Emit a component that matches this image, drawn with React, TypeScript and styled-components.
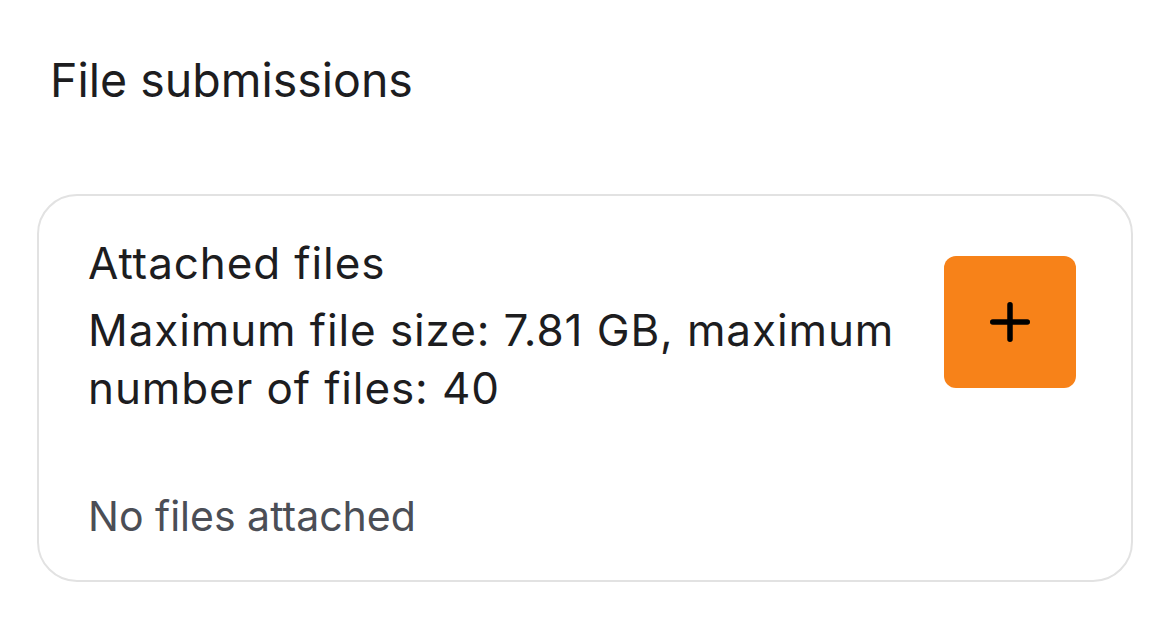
import React from "react";
import styled, { createGlobalStyle } from "styled-components";

const Global = createGlobalStyle`
  html, body { margin: 0; padding: 0; background: #ffffff; }
  body { font-family: Inter, Roboto, "Noto Sans", sans-serif; color: #1f1f1f; }
`;

const Page = styled.div`
  width: 1170px;
  height: 627px;
  box-sizing: border-box;
  padding: 50px 37px 0 37px;
  display: flex;
  flex-direction: column;
`;

const Title = styled.h1`
  margin: 0 0 0 13px;
  font-size: 46.5px;
  line-height: 60px;
  font-weight: 400;
  color: #1d1d1f;
`;

const Card = styled.section`
  margin-top: 84px;
  border: 2px solid #e2e2e2;
  border-radius: 40px;
  box-sizing: border-box;
  height: 388px;
  padding: 38px 55px 0 49px;
  display: flex;
  flex-direction: column;
`;

const Header = styled.div`
  display: flex;
  justify-content: space-between;
  align-items: flex-start;
`;

const Info = styled.div`
  display: flex;
  flex-direction: column;
`;

const Label = styled.div`
  font-size: 44px;
  line-height: 58px;
  letter-spacing: 0.9px;
  color: #1d1d1f;
  margin-bottom: 9px;
`;

const Hint = styled.div`
  font-size: 44px;
  line-height: 58px;
  letter-spacing: 0.9px;
  color: #1d1d1f;
  width: 840px;
`;

const AddButton = styled.button`
  margin-top: 22px;
  width: 132px;
  height: 132px;
  border: none;
  border-radius: 12px;
  background: #f78219;
  display: flex;
  align-items: center;
  justify-content: center;
  padding: 0;
  cursor: pointer;
`;

const Empty = styled.div`
  margin-top: 74px;
  font-size: 41px;
  line-height: 50px;
  color: #4b4e56;
`;

export default function App() {
  return (
    <>
      <Global />
      <Page>
        <Title>File submissions</Title>
        <Card>
          <Header>
            <Info>
              <Label>Attached files</Label>
              <Hint>Maximum file size: 7.81 GB, maximum number of files: 40</Hint>
            </Info>
            <AddButton aria-label="Add file">
              <svg width="40" height="40" viewBox="0 0 40 40" fill="none">
                <path d="M20 2.75v34.5M2.75 20h34.5" stroke="#000" strokeWidth="5.5" strokeLinecap="round" />
              </svg>
            </AddButton>
          </Header>
          <Empty>No files attached</Empty>
        </Card>
      </Page>
    </>
  );
}
